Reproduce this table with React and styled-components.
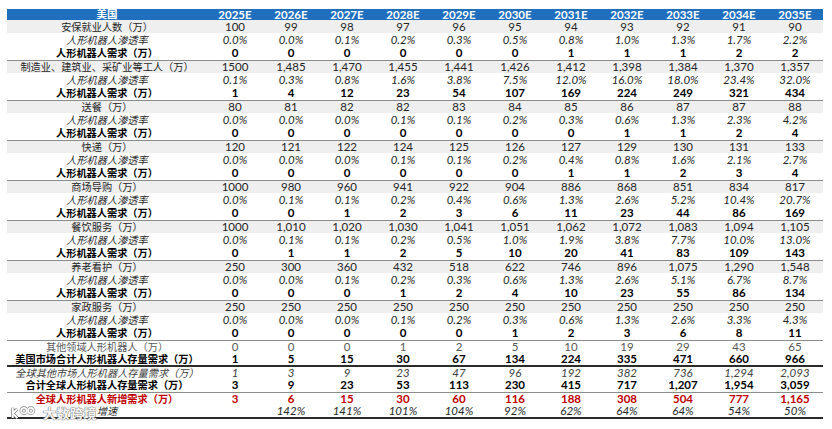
import React from 'react';
import styled, { createGlobalStyle, css } from 'styled-components';

const years = ['2025E', '2026E', '2027E', '2028E', '2029E', '2030E', '2031E', '2032E', '2033E', '2034E', '2035E'];

const groups = [
  {
    label: '安保就业人数（万）',
    base: ['100', '99', '98', '97', '96', '95', '94', '93', '92', '91', '90'],
    rate: ['0.0%', '0.0%', '0.1%', '0.2%', '0.3%', '0.5%', '0.8%', '1.0%', '1.3%', '1.7%', '2.2%'],
    demand: ['0', '0', '0', '0', '0', '0', '1', '1', '1', '2', '2'],
  },
  {
    label: '制造业、建筑业、采矿业等工人（万）',
    base: ['1500', '1,485', '1,470', '1,455', '1,441', '1,426', '1,412', '1,398', '1,384', '1,370', '1,357'],
    rate: ['0.1%', '0.3%', '0.8%', '1.6%', '3.8%', '7.5%', '12.0%', '16.0%', '18.0%', '23.4%', '32.0%'],
    demand: ['1', '4', '12', '23', '54', '107', '169', '224', '249', '321', '434'],
  },
  {
    label: '送餐（万）',
    base: ['80', '81', '82', '82', '83', '84', '85', '86', '87', '87', '88'],
    rate: ['0.0%', '0.0%', '0.0%', '0.1%', '0.1%', '0.2%', '0.3%', '0.6%', '1.3%', '2.3%', '4.2%'],
    demand: ['0', '0', '0', '0', '0', '0', '0', '1', '1', '2', '4'],
  },
  {
    label: '快递（万）',
    base: ['120', '121', '122', '124', '125', '126', '127', '129', '130', '131', '133'],
    rate: ['0.0%', '0.0%', '0.0%', '0.1%', '0.1%', '0.2%', '0.4%', '0.8%', '1.6%', '2.1%', '2.7%'],
    demand: ['0', '0', '0', '0', '0', '0', '1', '1', '2', '3', '4'],
  },
  {
    label: '商场导购（万）',
    base: ['1000', '980', '960', '941', '922', '904', '886', '868', '851', '834', '817'],
    rate: ['0.0%', '0.1%', '0.1%', '0.2%', '0.4%', '0.6%', '1.3%', '2.6%', '5.2%', '10.4%', '20.7%'],
    demand: ['0', '0', '1', '2', '3', '6', '11', '23', '44', '86', '169'],
  },
  {
    label: '餐饮服务（万）',
    base: ['1000', '1,010', '1,020', '1,030', '1,041', '1,051', '1,062', '1,072', '1,083', '1,094', '1,105'],
    rate: ['0.0%', '0.1%', '0.1%', '0.2%', '0.5%', '1.0%', '1.9%', '3.8%', '7.7%', '10.0%', '13.0%'],
    demand: ['0', '1', '1', '2', '5', '10', '20', '41', '83', '109', '143'],
  },
  {
    label: '养老看护（万）',
    base: ['250', '300', '360', '432', '518', '622', '746', '896', '1,075', '1,290', '1,548'],
    rate: ['0.0%', '0.0%', '0.1%', '0.2%', '0.3%', '0.6%', '1.3%', '2.6%', '5.1%', '6.7%', '8.7%'],
    demand: ['0', '0', '0', '1', '2', '4', '10', '23', '55', '86', '134'],
  },
  {
    label: '家政服务（万）',
    base: ['250', '250', '250', '250', '250', '250', '250', '250', '250', '250', '250'],
    rate: ['0.0%', '0.0%', '0.0%', '0.1%', '0.2%', '0.3%', '0.6%', '1.3%', '2.6%', '3.3%', '4.3%'],
    demand: ['0', '0', '0', '0', '0', '1', '2', '3', '6', '8', '11'],
  },
];

const totals = [
  { label: '其他领域人形机器人（万）', kind: 'muted', line: 'thin', values: ['0', '0', '0', '1', '2', '5', '10', '19', '29', '43', '65'] },
  { label: '美国市场合计人形机器人存量需求（万）', kind: 'bold', values: ['1', '5', '15', '30', '67', '134', '224', '335', '471', '660', '966'] },
  { label: '全球其他市场人形机器人存量需求（万）', kind: 'mutedItalic', line: 'thick', values: ['1', '3', '9', '23', '47', '96', '192', '382', '736', '1,294', '2,093'] },
  { label: '合计全球人形机器人存量需求（万）', kind: 'bold', values: ['3', '9', '23', '53', '113', '230', '415', '717', '1,207', '1,954', '3,059'] },
  { label: '全球人形机器人新增需求（万）', kind: 'red', line: 'thin', values: ['3', '6', '15', '30', '60', '116', '188', '308', '504', '777', '1,165'] },
  { label: '增速', kind: 'growth', values: ['', '142%', '141%', '101%', '104%', '92%', '62%', '64%', '64%', '54%', '50%'] },
];

const GlobalStyle = createGlobalStyle`
  html, body {
    margin: 0;
    background: #ffffff;
  }
  body {
    font-family: Lato, "Noto Sans CJK SC", sans-serif;
    color: #1a1a1a;
  }
`;

const Page = styled.div`
  position: relative;
  width: 832px;
  height: 429px;
  padding: 9px 0 0 7px;
  box-sizing: border-box;
  overflow: hidden;
`;

const Table = styled.table`
  width: 816px;
  border-collapse: collapse;
  table-layout: fixed;
  border-bottom: 2px solid #2b2b2b;
`;

const HeadCell = styled.th`
  height: 11px;
  padding: 0;
  background: #1f6fbe;
  color: #ffffff;
  font-weight: 700;
  font-size: ${(p) => (p.$label ? '10.5px' : '11.5px')};
  line-height: 11px;
  text-align: center;
  width: ${(p) => (p.$label ? '200px' : '56px')};
`;

const kinds = {
  base: css`
    color: #262626;
  `,
  rate: css`
    font-style: italic;
    color: #262626;
  `,
  demand: css`
    font-weight: 700;
    color: #000000;
  `,
  muted: css`
    color: #595959;
  `,
  bold: css`
    font-weight: 700;
    color: #000000;
  `,
  mutedItalic: css`
    font-style: italic;
    color: #404040;
  `,
  red: css`
    font-weight: 700;
    color: #c00000;
  `,
  growth: css`
    font-style: italic;
    color: #262626;
  `,
};

const Row = styled.tr`
  height: ${(p) => p.$h}px;
  background: ${(p) => (p.$shade ? '#efefef' : 'transparent')};
  ${(p) => p.$line === 'thin' && css`border-top: 1px solid #8c8c8c;`}
  ${(p) => p.$line === 'thick' && css`border-top: 2px solid #2b2b2b;`}
`;

const Cell = styled.td`
  padding: 0;
  font-size: 11.5px;
  line-height: 12px;
  text-align: center;
  white-space: nowrap;
  ${(p) => kinds[p.$kind]}
`;

const LabelCell = styled(Cell)`
  font-size: 10.2px;
`;

const Watermark = styled.div`
  position: absolute;
  left: 9px;
  top: 406px;
  display: flex;
  align-items: center;
  gap: 6px;
  color: rgba(255, 255, 255, 0.95);
  font-family: "Noto Sans CJK SC", sans-serif;
  font-weight: 700;
  font-size: 13px;
  line-height: 13px;
  letter-spacing: 0.5px;
  text-shadow: 0 0 1px #7a7a7a, 0 0 1px #7a7a7a, 0 0 1px #7a7a7a;
  pointer-events: none;
`;

const DataRow = ({ label, values, kind, shade, line, h }) => (
  <Row $shade={shade} $line={line} $h={h}>
    <LabelCell $kind={kind}>{label}</LabelCell>
    {values.map((v, i) => (
      <Cell key={i} $kind={kind}>
        {v}
      </Cell>
    ))}
  </Row>
);

export default function App() {
  return (
    <>
      <GlobalStyle />
      <Page>
        <Table>
          <thead>
            <tr>
              <HeadCell $label>美国</HeadCell>
              {years.map((y) => (
                <HeadCell key={y}>{y}</HeadCell>
              ))}
            </tr>
          </thead>
          <tbody>
            {groups.map((g, gi) => (
              <React.Fragment key={g.label}>
                <DataRow label={g.label} values={g.base} kind="base" shade line={gi > 0 ? 'thin' : null} h={13} />
                <DataRow label="人形机器人渗透率" values={g.rate} kind="rate" h={13} />
                <DataRow label="人形机器人需求（万）" values={g.demand} kind="demand" h={14} />
              </React.Fragment>
            ))}
            {totals.map((t) => (
              <DataRow key={t.label} label={t.label} values={t.values} kind={t.kind} line={t.line} h={13} />
            ))}
          </tbody>
        </Table>
        <Watermark>
          <svg width="28" height="13" viewBox="0 0 28 14">
            <g fill="none" stroke="#7a7a7a" strokeWidth="3.4">
              <path d="M3 2 L3 13 M3 8 L8 3 M3 8 L8 13" />
              <circle cx="15" cy="5" r="3" />
              <circle cx="22.5" cy="5" r="3" />
            </g>
            <g fill="none" stroke="#ffffff" strokeWidth="2">
              <path d="M3 2 L3 13 M3 8 L8 3 M3 8 L8 13" />
              <circle cx="15" cy="5" r="3" />
              <circle cx="22.5" cy="5" r="3" />
            </g>
          </svg>
          <span>大数跨境</span>
        </Watermark>
      </Page>
    </>
  );
}
